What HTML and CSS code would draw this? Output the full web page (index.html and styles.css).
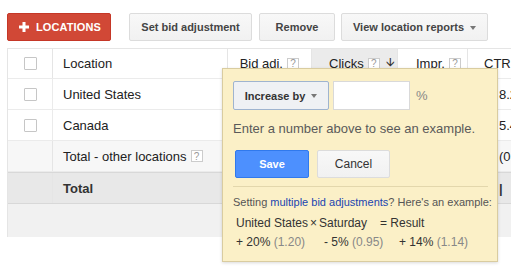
FILE: index.html
```
<!DOCTYPE html>
<html>
<head>
<meta charset="utf-8">
<link rel="stylesheet" href="styles.css">
</head>
<body>
<div class="page">
  <div class="toolbar">
    <button class="btn btn-red"><svg class="plus" width="10" height="10" viewBox="0 0 10 10"><rect x="3.5" y="0" width="3" height="10" fill="#fff"/><rect x="0" y="3.5" width="10" height="3" fill="#fff"/></svg>LOCATIONS</button>
    <button class="btn btn-set">Set bid adjustment</button>
    <button class="btn btn-remove">Remove</button>
    <button class="btn btn-view">View location reports <span class="caret"></span></button>
  </div>
  <div class="table">
    <div class="row head">
      <div class="cell c-check"><span class="cb"></span></div>
      <div class="cell c-loc">Location</div>
      <div class="cell c-bid">Bid adj. <span class="help">?</span></div>
      <div class="cell c-clicks">Clicks <span class="help">?</span> <span class="arrow">&#129131;</span></div>
      <div class="cell c-impr">Impr. <span class="help">?</span></div>
      <div class="cell c-ctr">CTR</div>
    </div>
    <div class="row">
      <div class="cell c-check"><span class="cb"></span></div>
      <div class="cell c-loc">United States</div>
      <div class="cell c-bid"></div>
      <div class="cell c-clicks"></div>
      <div class="cell c-impr"></div>
      <div class="cell c-ctr val">8.21%</div>
    </div>
    <div class="row">
      <div class="cell c-check"><span class="cb"></span></div>
      <div class="cell c-loc">Canada</div>
      <div class="cell c-bid"></div>
      <div class="cell c-clicks"></div>
      <div class="cell c-impr"></div>
      <div class="cell c-ctr val">5.40%</div>
    </div>
    <div class="row other">
      <div class="cell c-check"></div>
      <div class="cell c-loc">Total - other locations <span class="help">?</span></div>
      <div class="cell c-bid"></div>
      <div class="cell c-clicks"></div>
      <div class="cell c-impr"></div>
      <div class="cell c-ctr val">(0.00%)</div>
    </div>
    <div class="row total">
      <div class="cell c-check"></div>
      <div class="cell c-loc">Total</div>
      <div class="cell c-bid"></div>
      <div class="cell c-clicks"></div>
      <div class="cell c-impr"></div>
      <div class="cell c-ctr val">|</div>
    </div>
    <div class="row foot"></div>
  </div>

  <div class="popup">
    <div class="pop-row">
      <button class="btn btn-inc">Increase by <span class="caret"></span></button>
      <input class="pct" type="text">
      <span class="pct-sign">%</span>
    </div>
    <div class="hint">Enter a number above to see an example.</div>
    <div class="pop-actions">
      <button class="btn btn-save">Save</button>
      <button class="btn btn-cancel">Cancel</button>
    </div>
    <div class="sep"></div>
    <div class="note">Setting <a class="link">multiple bid adjustments</a>? Here's an example:</div>
    <div class="ex ex-head">
      <span class="e1">United States</span><span class="e2">&times;</span><span class="e3">Saturday</span><span class="e4">= Result</span>
    </div>
    <div class="ex ex-vals">
      <span class="f1">+ 20% <span class="g">(1.20)</span></span><span class="f2">- 5% <span class="g">(0.95)</span></span><span class="f3">+ 14% <span class="g">(1.14)</span></span>
    </div>
  </div>
</div>
</body>
</html>
```
FILE: styles.css
```
html, body {
  margin: 0;
  padding: 0;
}
body {
  width: 511px;
  height: 274px;
  overflow: hidden;
  background: #fff;
  font-family: "Liberation Sans", Arial, sans-serif;
  font-size: 13px;
  color: #222;
}
.page {
  position: relative;
  padding: 13px 0 0 7px;
  width: 600px;
}
.toolbar {
  display: flex;
  height: 28px;
}
.btn {
  box-sizing: border-box;
  height: 28px;
  border: 1px solid #dcdcdc;
  border-radius: 2px;
  background: linear-gradient(#f8f8f8, #f1f1f1);
  font-family: "Liberation Sans", Arial, sans-serif;
  font-weight: bold;
  font-size: 11px;
  color: #444;
  padding: 0;
  display: flex;
  align-items: center;
  justify-content: center;
  white-space: nowrap;
}
.btn-red {
  width: 104px;
  background: #d14836;
  border-color: #c53727;
  color: #fff;
  justify-content: flex-start;
  padding-left: 11px;
  letter-spacing: 0.1px;
}
.plus { margin-right: 7px; }
.btn-set { width: 123px; margin-left: 18px; }
.btn-remove { width: 76px; margin-left: 7px; }
.btn-view { width: 147px; margin-left: 6px; }
.caret {
  display: inline-block;
  width: 0;
  height: 0;
  border-left: 3.5px solid transparent;
  border-right: 3.5px solid transparent;
  border-top: 4px solid #777;
  margin-left: 6px;
  margin-top: 1px;
}
.table {
  margin-top: 7px;
  border-left: 1px solid #e5e5e5;
}
.row {
  display: flex;
  height: 30px;
  border-bottom: 1px solid #ebebeb;
  align-items: stretch;
}
.row.head {
  border-top: 1px solid #e5e5e5;
  height: 29px;
}
.cell {
  box-sizing: border-box;
  display: flex;
  align-items: center;
  flex: none;
  white-space: nowrap;
}
.c-check { width: 45px; justify-content: center; border-right: 1px solid #ebebeb; }
.c-loc { width: 175px; padding-left: 10px; }
.c-bid { width: 84px; justify-content: flex-end; padding-right: 12px; }
.c-clicks { width: 86px; padding-left: 17px; }
.c-impr { width: 70px; padding-left: 18px; }
.c-ctr { width: 100px; padding-left: 16px; }
.c-ctr.val { padding-left: 31px; }
.head .cell { border-right: 1px solid #e5e5e5; }
.head .c-clicks { background: #ebebeb; }
.cb {
  box-sizing: border-box;
  width: 13px;
  height: 13px;
  border: 1px solid #c6c6c6;
  border-radius: 1px;
  background: #fff;
}
.help {
  box-sizing: border-box;
  display: inline-flex;
  align-items: center;
  justify-content: center;
  width: 12px;
  height: 12px;
  border: 1px solid #ccc;
  font-size: 10px;
  font-weight: normal;
  color: #999;
  margin-left: 4px;
  background: #fff;
}
.arrow {
  margin-left: 6px;
  font-size: 12px;
  color: #333;
}
.row.other { background: #f7f7f7; }
.row.total {
  background: #e8e8e8;
  border-top: 1px solid #d8d8d8;
  border-bottom: 1px solid #d8d8d8;
  font-weight: bold;
  color: #333;
}
.row.foot {
  background: #f1f1f1;
  height: 33px;
  border-bottom: none;
}
.other .c-check, .total .c-check { border-right-color: #e5e5e5; }

.popup {
  position: absolute;
  left: 222px;
  top: 68px;
  box-sizing: border-box;
  width: 276px;
  height: 194px;
  background: #fbf0c7;
  border: 1px solid #d9cca0;
  box-shadow: 0 1px 3px rgba(0,0,0,0.15);
  padding: 12px 10px 0 10px;
}
.pop-row {
  display: flex;
  align-items: center;
  height: 29px;
}
.btn-inc {
  width: 96px;
  height: 29px;
  background: #eff1f4;
  border-color: #9fb4cf;
  color: #333;
}
.pct {
  box-sizing: border-box;
  width: 77px;
  height: 29px;
  margin: 0 0 0 4px;
  border: 1px solid #d9d9d9;
  background: #fff;
  padding: 0;
}
.pct-sign {
  margin-left: 6px;
  color: #888;
  font-size: 13px;
}
.hint {
  margin-top: 11px;
  color: #5a5a5a;
  font-size: 13px;
  line-height: 15px;
  white-space: nowrap;
}
.pop-actions {
  display: flex;
  margin-top: 14px;
  padding-left: 2px;
}
.btn-save {
  width: 74px;
  background: #4d90fe;
  border-color: #3079ed;
  color: #fff;
}
.btn-cancel {
  width: 73px;
  margin-left: 8px;
  font-weight: normal;
  font-size: 12px;
  color: #333;
}
.sep {
  height: 1px;
  background: #e3d7ac;
  margin-top: 8px;
  margin-right: -1px;
}
.note {
  margin-top: 9px;
  font-size: 11px;
  color: #555;
  white-space: nowrap;
  line-height: 13px;
}
.link { color: #1a44b0; }
.ex {
  display: flex;
  font-size: 12px;
  color: #333;
  padding-left: 3px;
  line-height: 15px;
  white-space: nowrap;
}
.ex span { flex: none; }
.ex-head { margin-top: 7px; }
.ex-vals { margin-top: 4px; }
.e1 { width: 74px; }
.e2 { width: 9px; }
.e3 { width: 61px; }
.f1 { width: 88px; }
.f2 { width: 75px; }
.g { color: #888; }
```
